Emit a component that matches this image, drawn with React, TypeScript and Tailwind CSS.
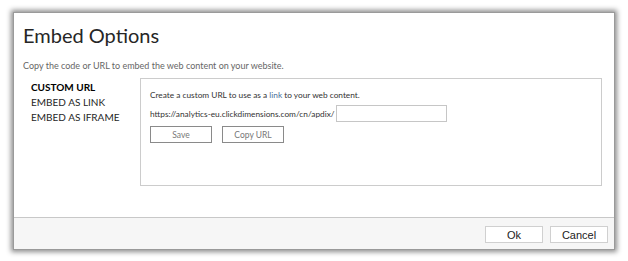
export default function App() {
  return (
    <div className="w-[628px] h-[261px] bg-white pt-[12px] pl-[13px]">
      <div
        className="w-[602px] h-[238px] bg-white flex flex-col shadow-[0_0_5px_2px_rgba(0,0,0,0.45)] border border-[#9a9a9a]"
        style={{ fontFamily: 'Lato, "Open Sans", sans-serif' }}
      >
        <div className="flex-1 px-[9px]">
          <h1 className="text-[20px] leading-none text-[#262626] mt-[12px]">Embed Options</h1>
          <p className="text-[9px] leading-[12px] text-[#666] mt-[15px]">
            Copy the code or URL to embed the web content on your website.
          </p>
          <div className="flex mt-[6px]">
            <ul className="w-[117px] pl-[8px] pt-[2px] text-[10px] leading-[15px] text-[#262626]">
              <li className="font-bold text-black">CUSTOM URL</li>
              <li>EMBED AS LINK</li>
              <li>EMBED AS IFRAME</li>
            </ul>
            <div className="w-[462px] h-[108px] border border-[#cccccc] px-[9px] pt-[10px] text-[8.3px] text-[#333]">
              <div>
                Create a custom URL to use as a <span className="text-[#4a6f9a]">link</span> to your web content.
              </div>
              <div className="flex items-center mt-[4px]">
                <span>https://analytics-eu.clickdimensions.com/cn/apdix/</span>
                <input className="ml-[1px] w-[111px] h-[17px] border border-[#c6c6c6] outline-none" />
              </div>
              <div className="flex gap-[10px] mt-[4px]">
                <button className="w-[62px] h-[17px] border border-[#8a8a8a] text-[#777] text-[8.5px]">Save</button>
                <button className="w-[62px] h-[17px] border border-[#8a8a8a] text-[#777] text-[8.5px]">Copy URL</button>
              </div>
            </div>
          </div>
        </div>
        <div
          className="h-[32px] bg-[#f6f6f6] border-t border-[#c8c8c8] flex items-center justify-end gap-[7px] pr-[6px] pt-[2px] text-[11px] text-[#222]"
          style={{ fontFamily: '"Liberation Sans", Arial, sans-serif' }}
        >
          <button className="w-[58px] h-[17px] bg-white border border-[#d0d0d0]">Ok</button>
          <button className="w-[58px] h-[17px] bg-white border border-[#d0d0d0]">Cancel</button>
        </div>
      </div>
    </div>
  );
}
